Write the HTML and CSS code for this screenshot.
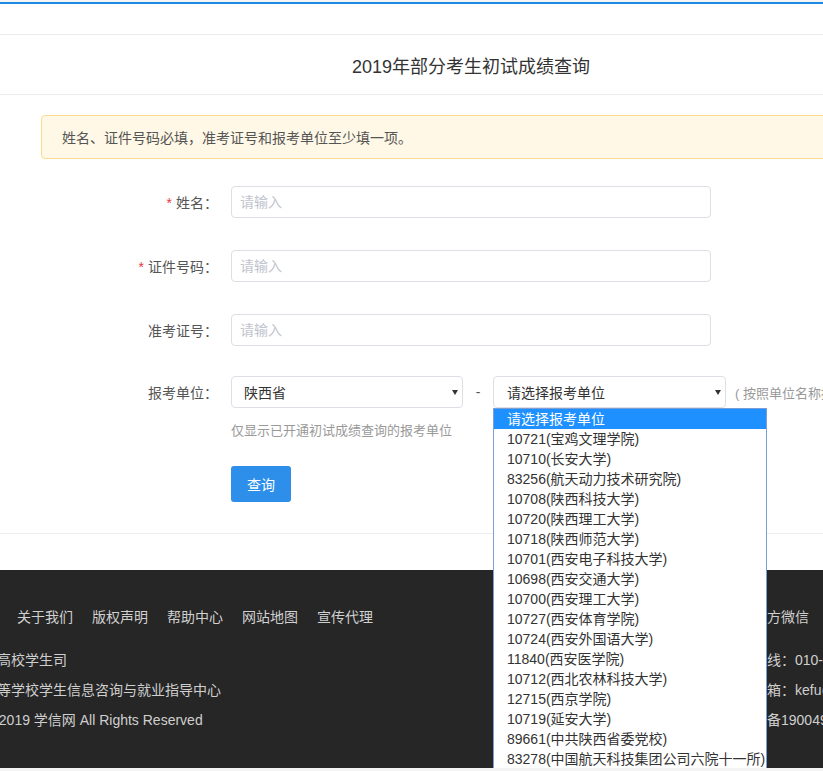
FILE: index.html
```html
<!DOCTYPE html>
<html lang="zh-CN">
<head>
<meta charset="utf-8">
<title>2019年部分考生初试成绩查询</title>
<link rel="stylesheet" href="styles.css">
</head>
<body>
<div class="page">
  <div class="accent"></div>
  <div class="topnav"></div>
  <div class="title-bar"><h1>2019年部分考生初试成绩查询</h1></div>
  <main class="main">
    <div class="alert">姓名、证件号码必填，准考证号和报考单位至少填一项。</div>
    <form class="form">
      <div class="row">
        <label class="label"><span class="req">*</span>姓名：</label>
        <input class="input" type="text" placeholder="请输入">
      </div>
      <div class="row">
        <label class="label"><span class="req">*</span>证件号码：</label>
        <input class="input" type="text" placeholder="请输入">
      </div>
      <div class="row tight">
        <label class="label">准考证号：</label>
        <input class="input" type="text" placeholder="请输入">
      </div>
      <div class="row row-select">
        <label class="label">报考单位：</label>
        <div class="select sel-prov">陕西省<i class="caret"></i></div>
        <span class="dash">-</span>
        <div class="select sel-unit">请选择报考单位<i class="caret"></i>
          <ul class="dropdown">
            <li class="active">请选择报考单位</li>
            <li>10721(宝鸡文理学院)</li>
            <li>10710(长安大学)</li>
            <li>83256(航天动力技术研究院)</li>
            <li>10708(陕西科技大学)</li>
            <li>10720(陕西理工大学)</li>
            <li>10718(陕西师范大学)</li>
            <li>10701(西安电子科技大学)</li>
            <li>10698(西安交通大学)</li>
            <li>10700(西安理工大学)</li>
            <li>10727(西安体育学院)</li>
            <li>10724(西安外国语大学)</li>
            <li>11840(西安医学院)</li>
            <li>10712(西北农林科技大学)</li>
            <li>12715(西京学院)</li>
            <li>10719(延安大学)</li>
            <li>89661(中共陕西省委党校)</li>
            <li>83278(中国航天科技集团公司六院十一所)</li>
          </ul>
        </div>
        <span class="hint">( 按照单位名称拼音排序 )</span>
      </div>
      <div class="note">仅显示已开通初试成绩查询的报考单位</div>
      <div class="actions"><button type="button" class="btn">查询</button></div>
    </form>
  </main>
  <footer class="footer">
    <div class="footer-inner">
      <div class="f-left">
        <nav class="links">
          <a>关于我们</a><a>版权声明</a><a>帮助中心</a><a>网站地图</a><a>宣传代理</a>
        </nav>
        <div class="f-line">主管单位：教育部高校学生司</div>
        <div class="f-line">主办单位：全国高等学校学生信息咨询与就业指导中心</div>
        <div class="f-line">Copyright © 2003-2019 学信网 All Rights Reserved</div>
      </div>
      <div class="f-right">
        <div class="f-head">学信网官方微信</div>
        <div class="f-line">学信网热线：010-82199588</div>
        <div class="f-line">学信网邮箱：kefu@chsi.com.cn</div>
        <div class="f-line">京公网安备19004913号</div>
      </div>
    </div>
  </footer>
</div>
</body>
</html>
```
FILE: styles.css
```css
html {
  background: #f4f4f4;
}
html, body {
  margin: 0;
  overflow: hidden;
}
body {
  font-family: "Liberation Sans", "Noto Sans CJK SC", sans-serif;
  font-size: 14px;
  color: #333;
}
.page {
  width: 942px;
  background: #fff;
}
.accent {
  margin-top: 2px;
  height: 2px;
  background: #1e88e5;
}
.topnav {
  height: 30px;
  border-bottom: 1px solid #ebebeb;
}
.title-bar {
  height: 59px;
  border-bottom: 1px solid #ebebeb;
  display: flex;
  align-items: center;
  justify-content: center;
}
.title-bar h1 {
  margin: 0;
  font-size: 18px;
  font-weight: normal;
  color: #333;
}
.main {
  padding: 20px 41px 31px;
  border-bottom: 1px solid #ececec;
}
.alert {
  height: 42px;
  border: 1px solid #fadc8f;
  background: #fff8e6;
  border-radius: 4px;
  padding-left: 20px;
  display: flex;
  align-items: center;
  color: #555;
}
.form {
  margin: 27px 0 0;
}
.row {
  display: flex;
  align-items: center;
  height: 32px;
  margin-bottom: 32px;
}
.row.tight {
  margin-bottom: 30px;
}
.row.row-select {
  margin-bottom: 13px;
}
.label {
  flex: none;
  width: 177px;
  margin-right: 13px;
  text-align: right;
  color: #555;
}
.req {
  color: #e4393c;
  margin-right: 4px;
}
.input {
  width: 480px;
  height: 32px;
  box-sizing: border-box;
  border: 1px solid #dcdfe6;
  border-radius: 4px;
  padding: 0 8px;
  font-family: inherit;
  font-size: 14px;
  color: #333;
  outline: none;
}
.input::placeholder {
  color: #c0c4cc;
}
.select {
  position: relative;
  flex: none;
  height: 32px;
  box-sizing: border-box;
  border: 1px solid #dcdfe6;
  border-radius: 4px;
  display: flex;
  align-items: center;
  color: #333;
  font-size: 14px;
}
.sel-prov {
  width: 232px;
  padding-left: 12px;
}
.sel-unit {
  width: 233px;
  padding-left: 13px;
}
.caret {
  position: absolute;
  right: 4px;
  top: 13px;
  width: 0;
  height: 0;
  border-left: 3px solid transparent;
  border-right: 3px solid transparent;
  border-top: 5px solid #333;
}
.dash {
  flex: none;
  width: 30px;
  text-align: center;
  color: #555;
}
.hint {
  margin-left: 9px;
  color: #999;
  font-size: 13px;
  white-space: nowrap;
}
.dropdown {
  position: absolute;
  top: 31px;
  left: -1px;
  width: 274px;
  box-sizing: border-box;
  margin: 0;
  padding: 0;
  list-style: none;
  background: #fff;
  border: 1px solid #7b9ed6;
  z-index: 10;
}
.dropdown li {
  height: 20px;
  line-height: 20px;
  padding-left: 13px;
  color: #333;
  white-space: nowrap;
}
.dropdown li.active {
  background: #1e90ff;
  color: #fff;
}
.note {
  margin-left: 190px;
  line-height: 20px;
  font-size: 13px;
  color: #999;
}
.actions {
  margin: 25px 0 0 190px;
}
.btn {
  display: block;
  width: 60px;
  height: 36px;
  border: 0;
  border-radius: 3px;
  background: #2d8fe9;
  color: #fff;
  font-family: inherit;
  font-size: 14px;
  cursor: pointer;
}
.footer {
  margin-top: 36px;
  height: 198px;
  background: #262626;
  color: #cfcfcf;
  overflow: hidden;
}
.footer-inner {
  display: flex;
  margin-left: -115px;
  padding-top: 37px;
}
.f-left {
  flex: none;
  width: 826px;
}
.f-right {
  flex: none;
  white-space: nowrap;
}
.links {
  display: flex;
  gap: 19px;
  padding-left: 132px;
  line-height: 20px;
  margin-bottom: 18px;
}
.links a {
  color: #d0d0d0;
}
.f-head {
  line-height: 20px;
  margin-bottom: 18px;
}
.f-line {
  line-height: 30px;
  white-space: nowrap;
}
```
